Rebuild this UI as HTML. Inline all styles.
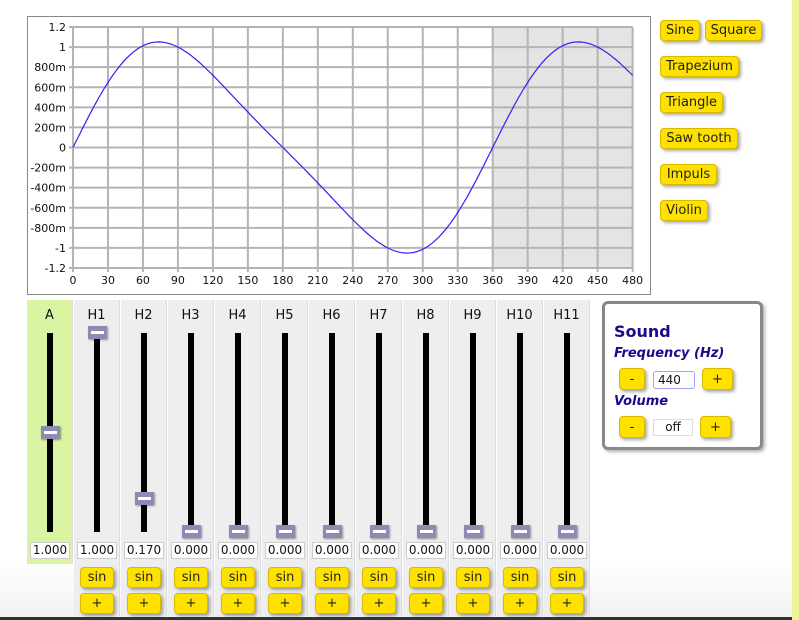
<!DOCTYPE html>
<html><head><meta charset="utf-8">
<style>
*{box-sizing:border-box}
body{margin:0;width:799px;height:620px;overflow:hidden;background:linear-gradient(#fff 0,#fff 560px,#f2f2f2 618px);font-family:"DejaVu Sans","Liberation Sans",sans-serif;position:relative}
.strip{position:absolute;left:792px;top:0;width:7px;height:620px;background:#eef396}
.bottom{position:absolute;left:0;top:617px;width:792px;height:3px;background:#333}
.chart{position:absolute;left:27px;top:16px;width:624px;height:279px;border:1px solid #888;background:#fff}
.btn{position:absolute;background:#ffe100;border:1px solid #d9b800;border-radius:4px;box-shadow:2px 2px 3px rgba(0,0,0,.35);font-size:13px;color:#222;display:flex;align-items:center;justify-content:center;line-height:1}
.col{position:absolute;top:300px;width:46px;height:316px;background:#eeeeee;border-right:1px solid #ddd}
.col.a{background:#d9f5a3;height:264px}
.lbl{position:absolute;top:8px;width:100%;text-align:center;font-size:13px;color:#111}
.track{position:absolute;left:20px;top:33px;width:6px;height:199px;background:#000}
.thumb{position:absolute;left:14px;width:19px;height:13px;background:#8f8ab3;box-shadow:1px 1px 2px rgba(0,0,0,.4)}
.thumb:after{content:"";position:absolute;left:3px;top:5px;width:13px;height:3px;background:#fff}
.val{position:absolute;left:3px;top:242px;width:40px;height:17px;background:#fff;border:1px solid #ccc;font-size:12px;text-align:center;line-height:15px;color:#111}
.sound{position:absolute;left:602px;top:301px;width:161px;height:149px;border:3px solid #888;border-radius:6px;background:#fff;box-shadow:2px 2px 3px rgba(0,0,0,.3);color:#1a0a8c}
</style></head><body>
<div class="strip"></div>
<div class="chart">
<svg width="624" height="279" style="position:absolute;left:-1px;top:-1px" font-family="DejaVu Sans, Liberation Sans, sans-serif" font-size="11">
<g id="g"></g>
</svg>
</div>
<div class="btn" style="left:660px;top:20px;width:40px;height:21px">Sine</div>
<div class="btn" style="left:705px;top:20px;width:57px;height:21px">Square</div>
<div class="btn" style="left:660px;top:56px;width:79px;height:21px">Trapezium</div>
<div class="btn" style="left:660px;top:92px;width:63px;height:21px">Triangle</div>
<div class="btn" style="left:660px;top:128px;width:78px;height:21px">Saw tooth</div>
<div class="btn" style="left:660px;top:164px;width:57px;height:21px">Impuls</div>
<div class="btn" style="left:660px;top:200px;width:48px;height:21px">Violin</div>
<div id="cols"></div>
<div class="sound">
<div style="position:absolute;left:9px;top:18px;font-size:16px;font-weight:bold">Sound</div>
<div style="position:absolute;left:9px;top:42px;font-size:13px;font-weight:bold;font-style:italic">Frequency (Hz)</div>
<div class="btn" style="left:14px;top:64px;width:26px;height:22px">-</div>
<div style="position:absolute;left:48px;top:67px;width:42px;height:18px;border:1px solid #a9a0f0;border-radius:3px;font-size:12px;color:#111;line-height:16px;padding-left:4px">440</div>
<div class="btn" style="left:97px;top:64px;width:31px;height:22px">+</div>
<div style="position:absolute;left:9px;top:90px;font-size:13px;font-weight:bold;font-style:italic">Volume</div>
<div class="btn" style="left:14px;top:112px;width:26px;height:22px">-</div>
<div style="position:absolute;left:48px;top:115px;width:40px;height:17px;border:1px solid #ddd;font-size:12px;color:#111;line-height:15px;text-align:center">off</div>
<div class="btn" style="left:95px;top:112px;width:31px;height:22px">+</div>
</div>
<div class="bottom"></div>
<script>
var ns="http://www.w3.org/2000/svg",g=document.getElementById('g'),s='';
var ox=46,ty=11,w=559.6,h=241;
function X(d){return ox+d/480*w}
function Y(v){return ty+(1.2-v)/2.4*h}
s+='<rect x="'+X(360)+'" y="'+ty+'" width="'+(X(480)-X(360))+'" height="'+h+'" fill="#e4e4e4"/>';
for(var i=0;i<=16;i++){var x=X(i*30);s+='<line x1="'+x+'" y1="'+ty+'" x2="'+x+'" y2="'+(ty+h+4)+'" stroke="#b4b4b4" stroke-width="2"/>';s+='<text x="'+x+'" y="'+(ty+h+16)+'" text-anchor="middle" fill="#111">'+(i*30)+'</text>';}
var yl=['1.2','1','800m','600m','400m','200m','0','-200m','-400m','-600m','-800m','-1','-1.2'];
for(var j=0;j<=12;j++){var y=ty+j*h/12;s+='<line x1="'+(ox-4)+'" y1="'+y+'" x2="'+X(480)+'" y2="'+y+'" stroke="#b4b4b4" stroke-width="2"/>';s+='<text x="'+(ox-7)+'" y="'+(y+4)+'" text-anchor="end" fill="#111">'+yl[j]+'</text>';}
var p='';for(var d=0;d<=480;d+=2){var r=d*Math.PI/180;var v=Math.sin(r)+0.17*Math.sin(2*r);p+=(d?'L':'M')+X(d).toFixed(1)+' '+Y(v).toFixed(1);}
s+='<path d="'+p+'" fill="none" stroke="#3a1df5" stroke-width="1.2"/>';
g.innerHTML=s;
var c='',names=['A','H1','H2','H3','H4','H5','H6','H7','H8','H9','H10','H11'],vals=['1.000','1.000','0.170','0.000','0.000','0.000','0.000','0.000','0.000','0.000','0.000','0.000'],th=[126,26,192,225,225,225,225,225,225,225,225,225];
for(var k=0;k<12;k++){var L=27+k*47;c+='<div class="col'+(k?'':' a')+'" style="left:'+L+'px"><div class="lbl">'+names[k]+'</div><div class="track"></div><div class="thumb" style="top:'+th[k]+'px"></div><div class="val">'+vals[k]+'</div>'+(k?'<div class="btn" style="left:6px;top:267px;width:34px;height:21px">sin</div><div class="btn" style="left:6px;top:293px;width:34px;height:21px">+</div>':'')+'</div>';}
document.getElementById('cols').innerHTML=c;
</script>
</body></html>
